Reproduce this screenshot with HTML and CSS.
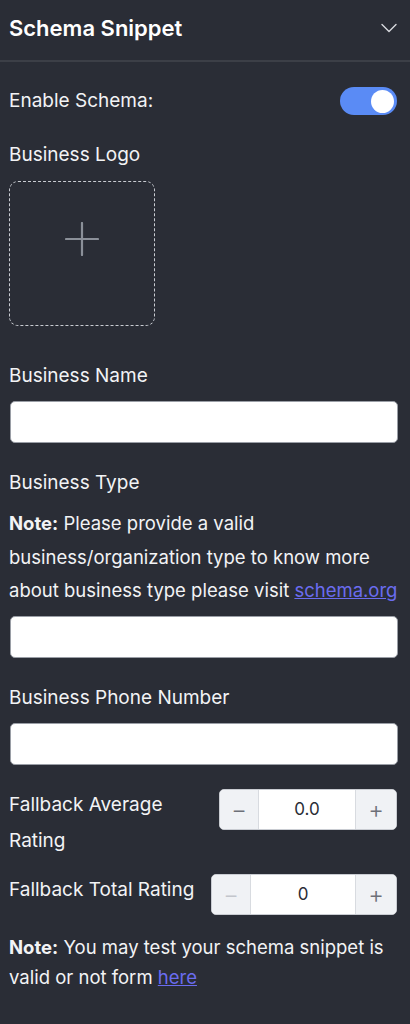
FILE: index.html
```html
<!DOCTYPE html>
<html lang="en">
<head>
    <meta charset="UTF-8">
    <meta name="viewport" content="width=device-width, initial-scale=1.0">
    <title>Schema Snippet</title>
    <link rel="stylesheet" href="styles.css">
</head>
<body>

<div class="panel">
    <div class="panel-header">
        <h2>Schema Snippet</h2>
        <svg class="chevron" width="16" height="10" viewBox="0 0 16 10"><path d="M1 1.5l7 7 7-7" fill="none" stroke="#d8dade" stroke-width="1.4" stroke-linecap="round" stroke-linejoin="round"/></svg>
    </div>

    <div class="panel-body">
        <div class="row toggle-row">
            <span class="label">Enable Schema:</span>
            <span class="toggle"><span class="knob"></span></span>
        </div>

        <div class="field logo-field">
            <span class="label">Business Logo</span>
            <div class="logo-upload">
                <svg width="34" height="34" viewBox="0 0 34 34"><path d="M17 1v32M1 17h32" stroke="#8b9099" stroke-width="2.2" stroke-linecap="round"/></svg>
            </div>
        </div>

        <div class="field">
            <span class="label">Business Name</span>
            <input type="text" class="text-input">
        </div>

        <div class="field">
            <span class="label">Business Type</span>
            <p class="note"><b>Note:</b> Please provide a valid business/organization type to know more about business type please visit <a href="#">schema.org</a></p>
            <input type="text" class="text-input type-input">
        </div>

        <div class="field">
            <span class="label">Business Phone Number</span>
            <input type="text" class="text-input">
        </div>

        <div class="row rating-row">
            <span class="label rating-label">Fallback Average Rating</span>
            <div class="stepper">
                <button class="step">&minus;</button>
                <input type="text" class="step-value" value="0.0">
                <button class="step">+</button>
            </div>
        </div>

        <div class="row rating-row total">
            <span class="label">Fallback Total Rating</span>
            <div class="stepper">
                <button class="step disabled">&minus;</button>
                <input type="text" class="step-value" value="0">
                <button class="step">+</button>
            </div>
        </div>

        <p class="note footer-note"><b>Note:</b> You may test your schema snippet is valid or not form <a href="#">here</a></p>
    </div>
</div>

</body>
</html>
```

FILE: styles.css
```css
body {
    margin: 0;
    background-color: #2a2d36;
    font-family: Inter, "Noto Sans", sans-serif;
    color: #f2f3f5;
}
.panel {
    width: 410px;
    min-height: 1024px;
}
.panel-header {
    display: flex;
    justify-content: space-between;
    align-items: center;
    height: 62px;
    padding: 0 13px 5px 9px;
    box-sizing: border-box;
    border-bottom: 2px solid #3c3f47;
}
.panel-header h2 {
    margin: 0;
    font-size: 22px;
    font-weight: 600;
    color: #ffffff;
}
.panel-body {
    padding: 25px 13px 0 9px;
}
.label {
    font-size: 19px;
    line-height: 26px;
}
.row {
    display: flex;
    justify-content: space-between;
    align-items: center;
}
.toggle {
    width: 57px;
    height: 28px;
    border-radius: 14px;
    background-color: #5a8bf5;
    display: flex;
    align-items: center;
    justify-content: flex-end;
    padding: 0 3px;
    box-sizing: border-box;
}
.knob {
    width: 23px;
    height: 23px;
    border-radius: 50%;
    background-color: #ffffff;
}
.field {
    display: flex;
    flex-direction: column;
    margin-top: 27px;
}
.logo-field + .field {
    margin-top: 37px;
}
.logo-upload {
    margin-top: 13px;
    width: 146px;
    height: 145px;
    border: 1.5px dashed #c9ccd2;
    border-radius: 9px;
    box-sizing: border-box;
    display: flex;
    justify-content: center;
    padding-top: 40px;
}
.text-input {
    margin: 12px -1px 0 1px;
    height: 42px;
    border: 1px solid #9a9ea6;
    border-radius: 5px;
    background-color: #ffffff;
    box-sizing: border-box;
    font-size: 16px;
    padding: 0 10px;
}
.note {
    margin: 11px -10px 0 0;
    font-size: 18.5px;
    line-height: 33.5px;
}
.note a {
    color: #6b6cf0;
}
.type-input {
    margin-top: 8px;
}
.rating-row {
    margin-top: 22px;
    align-items: flex-start;
}
.rating-label {
    max-width: 185px;
    line-height: 36px;
}
.rating-row .stepper {
    margin-top: 2px;
}
.rating-row.total {
    margin-top: 15px;
}
.rating-row.total .label {
    margin-top: 3px;
}
.rating-row.total .stepper {
    margin-top: 0;
}
.stepper {
    display: flex;
    height: 41px;
    background-color: #ffffff;
    border: 1px solid #c9ccd2;
    border-radius: 5px;
    overflow: hidden;
    box-sizing: border-box;
}
.step {
    width: 39px;
    border: none;
    background-color: #f0f2f5;
    color: #6d7078;
    font-size: 24px;
    font-weight: 300;
    font-family: Inter, sans-serif;
    padding: 0;
}
.step:first-child {
    border-right: 1px solid #d8dbe0;
}
.step:last-child {
    width: 41px;
    border-left: 1px solid #d8dbe0;
}
.step.disabled {
    color: #c3c6cc;
}
.step-value {
    width: 96px;
    border: none;
    text-align: center;
    font-size: 17px;
    font-family: Inter, sans-serif;
    color: #2a2d36;
    padding: 0;
}
.total .step-value {
    width: 104px;
}
.footer-note {
    margin-top: 17px;
    margin-right: 0;
    line-height: 30px;
}
```
